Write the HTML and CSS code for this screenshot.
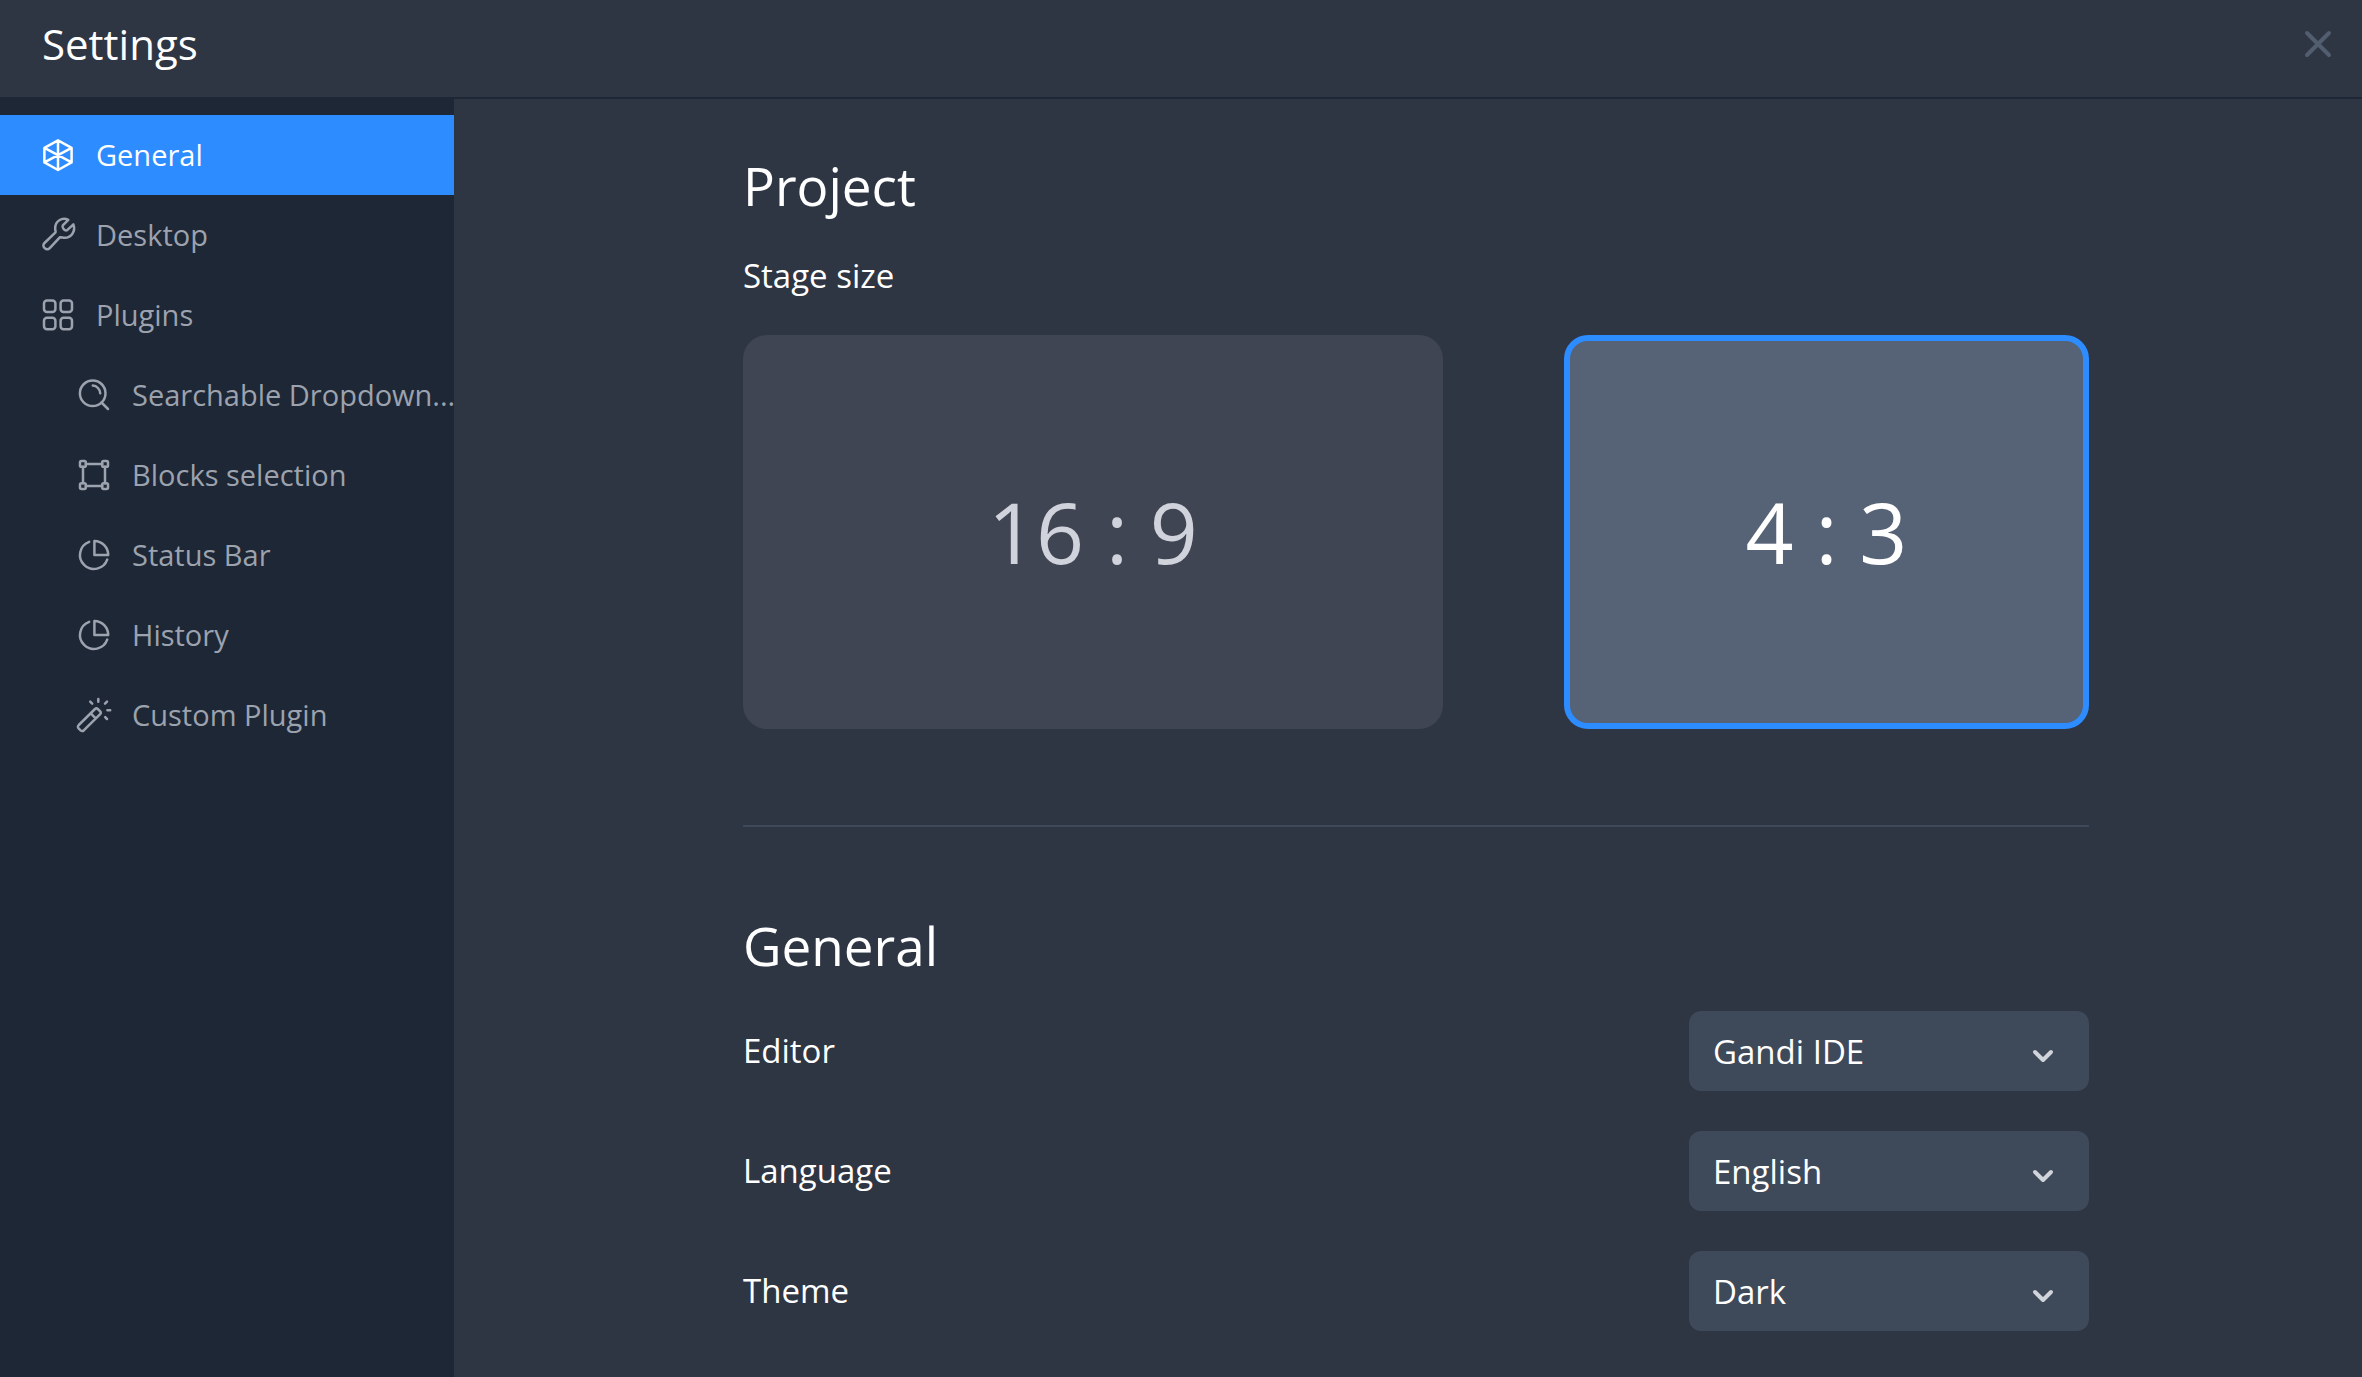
FILE: index.html
```html
<!DOCTYPE html>
<html lang="en">
<head>
<meta charset="utf-8">
<meta name="viewport" content="width=device-width, initial-scale=1">
<title>Settings</title>
<link rel="stylesheet" href="styles.css">
</head>
<body>
<div class="settings">
  <header class="header">
    <h1 class="header-title">Settings</h1>
    <button class="close" type="button" aria-label="Close">
      <svg class="close-icon" viewBox="0 0 28 28" aria-hidden="true"><path d="M3 3 25 25M25 3 3 25"/></svg>
    </button>
  </header>
  <div class="body">
    <nav class="sidebar" aria-label="Settings sections">
      <a class="nav-item active" href="#general" aria-current="page">
        <svg class="icon" viewBox="0 0 36 36" aria-hidden="true"><path d="M18 3.4 31.6 10.8V25.4L18 33 4.4 25.4V10.8ZM18 3.4V33M4.4 10.8 31.6 25.4M31.6 10.8 4.4 25.4"/></svg>
        <span class="nav-text">General</span>
      </a>
      <a class="nav-item" href="#desktop">
        <svg class="icon" viewBox="0 0 36 36" aria-hidden="true"><path d="M28.3 2.8 22.8 8.4C21.6 10.8 24.8 14.4 27.2 13.2L33.4 7.4C36 14.5 31 22 22.5 20.6L20 20.2 10 30.8C6.5 34.5 1 29.5 4.5 26L15.5 15.4C16 14 15 13.5 15.2 11.5 15 4 22 0 28.3 2.8Z"/></svg>
        <span class="nav-text">Desktop</span>
      </a>
      <a class="nav-item" href="#plugins">
        <svg class="icon" viewBox="0 0 36 36" aria-hidden="true"><rect x="4" y="3.6" width="11.4" height="11.4" rx="3"/><rect x="20.6" y="3.6" width="11.4" height="11.4" rx="3"/><rect x="4" y="20.8" width="11.4" height="11.4" rx="3"/><rect x="20.6" y="20.8" width="11.4" height="11.4" rx="3"/></svg>
        <span class="nav-text">Plugins</span>
      </a>
      <a class="nav-item sub" href="#searchable-dropdown">
        <svg class="icon" viewBox="0 0 36 36" aria-hidden="true"><circle cx="16.7" cy="16.3" r="12.8"/><path d="M25.5 25.5 32 32M16.8 8.6A8 8 0 0 1 24.2 16.2"/></svg>
        <span class="nav-text">Searchable Dropdown...</span>
      </a>
      <a class="nav-item sub" href="#blocks-selection">
        <svg class="icon" viewBox="0 0 36 36" aria-hidden="true"><rect x="4" y="4" width="5.8" height="5.8" rx="1.4"/><rect x="26.2" y="4" width="5.8" height="5.8" rx="1.4"/><rect x="4" y="26.2" width="5.8" height="5.8" rx="1.4"/><rect x="26.2" y="26.2" width="5.8" height="5.8" rx="1.4"/><path d="M9.8 7H26.2M9.8 29H26.2M7 9.8V26.2M29 9.8V26.2"/></svg>
        <span class="nav-text">Blocks selection</span>
      </a>
      <a class="nav-item sub" href="#status-bar">
        <svg class="icon" viewBox="0 0 36 36" aria-hidden="true"><path d="M13.2 4.8A14 14 0 1 0 31.2 22.6M18.4 3.9V18H32.2A14 14 0 0 0 18.4 3.9Z"/></svg>
        <span class="nav-text">Status Bar</span>
      </a>
      <a class="nav-item sub" href="#history">
        <svg class="icon" viewBox="0 0 36 36" aria-hidden="true"><path d="M13.2 4.8A14 14 0 1 0 31.2 22.6M18.4 3.9V18H32.2A14 14 0 0 0 18.4 3.9Z"/></svg>
        <span class="nav-text">History</span>
      </a>
      <a class="nav-item sub" href="#custom-plugin">
        <svg class="icon" viewBox="0 0 36 36" aria-hidden="true"><path d="M19 12 2.8 28Q1 29.9 2.8 31.6L4.6 33.4Q6.2 34.8 8 33.2L24.2 17.2Q25.4 15.8 24.2 14.4L21.8 12Q20.4 10.8 19 12ZM14.8 16.4 19.6 21.4M14.2 4.6 16.2 6.6M22.3 2V4.8M31 4.6 29 6.6M31.4 13.3H34.2M29.2 20.2 31 22"/></svg>
        <span class="nav-text">Custom Plugin</span>
      </a>
    </nav>
    <main class="content">
      <div class="column">
        <section class="section project">
          <h2 class="section-title">Project</h2>
          <fieldset class="stage">
            <legend class="stage-legend">Stage size</legend>
            <div class="stage-options">
              <label class="stage-option wide"><input class="stage-input" type="radio" name="stage"><span class="stage-text">16 : 9</span></label>
              <label class="stage-option standard"><input class="stage-input" type="radio" name="stage" checked><span class="stage-text">4 : 3</span></label>
            </div>
          </fieldset>
        </section>
        <section class="section">
          <h2 class="section-title">General</h2>
          <div class="rows">
            <div class="row">
              <label class="row-label" for="editor">Editor</label>
              <div class="dropdown">
                <select class="select" id="editor"><option>Gandi IDE</option></select>
                <svg class="chevron" viewBox="0 0 20 12" aria-hidden="true"><path d="M2 2 10 10 18 2"/></svg>
              </div>
            </div>
            <div class="row">
              <label class="row-label" for="language">Language</label>
              <div class="dropdown">
                <select class="select" id="language"><option>English</option></select>
                <svg class="chevron" viewBox="0 0 20 12" aria-hidden="true"><path d="M2 2 10 10 18 2"/></svg>
              </div>
            </div>
            <div class="row">
              <label class="row-label" for="theme">Theme</label>
              <div class="dropdown">
                <select class="select" id="theme"><option>Dark</option></select>
                <svg class="chevron" viewBox="0 0 20 12" aria-hidden="true"><path d="M2 2 10 10 18 2"/></svg>
              </div>
            </div>
          </div>
        </section>
      </div>
    </main>
  </div>
</div>
</body>
</html>
```
FILE: styles.css
```css
* {
  box-sizing: border-box;
}

body {
  margin: 0;
  background: #2e3543;
  color: #fff;
  font-family: "Segoe UI", "Open Sans", "Noto Sans", sans-serif;
}

h1,
h2 {
  margin: 0;
  font-weight: 400;
}

svg {
  display: block;
  overflow: visible;
  fill: none;
  stroke: currentColor;
  stroke-linecap: round;
  stroke-linejoin: round;
}

.settings {
  display: flex;
  flex-direction: column;
  min-height: 100vh;
}

.header {
  display: flex;
  align-items: center;
  justify-content: space-between;
  padding: 14px 24px 23px 42px;
  border-bottom: 2px solid #1e2735;
}

.header-title {
  font-size: 42px;
  line-height: 60px;
}

.close {
  padding: 6px;
  border: 0;
  background: none;
  color: #525d70;
  cursor: pointer;
}

.close-icon {
  width: 28px;
  height: 28px;
  stroke-width: 4;
}

.body {
  display: flex;
  flex: 1;
}

.sidebar {
  flex: 0 0 454px;
  min-width: 0;
  padding-top: 16px;
  background: #1e2735;
}

.nav-item {
  display: flex;
  align-items: center;
  gap: 20px;
  height: 80px;
  padding-left: 40px;
  color: #9ca2ae;
  font-size: 29px;
  line-height: 40px;
  text-decoration: none;
  white-space: nowrap;
}

.nav-item.sub {
  padding-left: 76px;
}

.nav-item.active {
  background: #2d8cff;
  color: #fff;
}

.icon {
  flex: none;
  width: 36px;
  height: 36px;
  stroke-width: 2.5;
}

.content {
  flex: 1;
  min-width: 0;
  padding: 48px 24px 46px 40px;
}

.column {
  max-width: 1346px;
  margin: 0 auto;
}

.project {
  padding-bottom: 96px;
  margin-bottom: 80px;
  border-bottom: 2px solid #3e495a;
}

.section-title {
  font-size: 53px;
  line-height: 78px;
}

.stage {
  min-width: 0;
  margin: 0;
  padding: 0;
  border: 0;
}

.stage-legend {
  padding: 26px 0 34px;
  font-size: 33px;
  line-height: 50px;
}

.stage-options {
  display: flex;
  justify-content: space-between;
  gap: 24px;
}

.stage-option {
  display: grid;
  cursor: pointer;
}

.wide {
  flex: 0 1 700px;
  aspect-ratio: 16 / 9;
}

.standard {
  flex: 0 1 525px;
  aspect-ratio: 4 / 3;
}

.stage-input,
.stage-text {
  grid-area: 1 / 1;
}

.stage-input {
  appearance: none;
  width: 100%;
  height: 100%;
  margin: 0;
  border-radius: 24px;
  background: #3f4552;
}

.stage-input:checked {
  border: 6px solid #2d8cff;
  background: #566275;
}

.stage-text {
  place-self: center;
  color: #d0d3dc;
  font-size: 84px;
  line-height: 120px;
}

.stage-input:checked + .stage-text {
  color: #fff;
}

.rows {
  display: flex;
  flex-direction: column;
  gap: 40px;
  padding-top: 26px;
}

.row {
  display: flex;
  align-items: center;
  justify-content: space-between;
}

.row-label {
  font-size: 33px;
  line-height: 50px;
}

.dropdown {
  display: grid;
  align-items: center;
  width: 400px;
}

.select,
.chevron {
  grid-area: 1 / 1;
}

.select {
  appearance: none;
  width: 100%;
  height: 80px;
  padding: 2px 72px 0 24px;
  border: 0;
  border-radius: 12px;
  background: #3e495a;
  color: #fff;
  font: inherit;
  font-size: 33px;
}

.chevron {
  justify-self: end;
  width: 20px;
  height: 12px;
  margin: 10px 36px 0 0;
  color: #d0d3da;
  stroke-width: 4;
  pointer-events: none;
}
```
